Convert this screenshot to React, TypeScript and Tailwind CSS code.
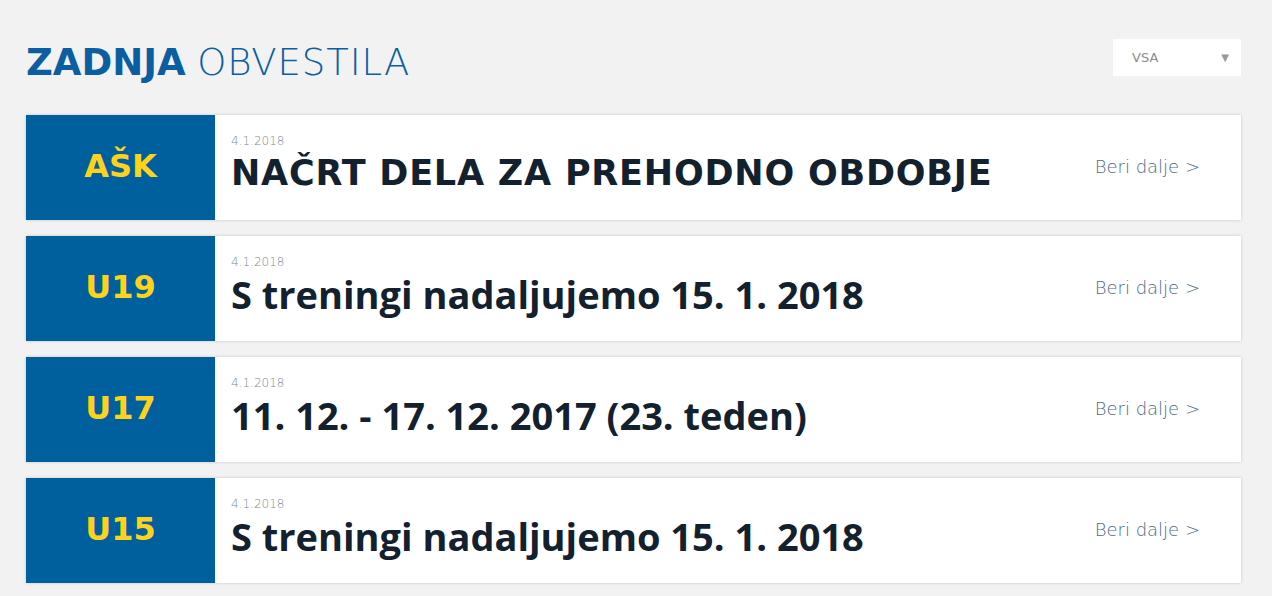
const items = [
  { tag: "AŠK", date: "4.1.2018", title: "NAČRT DELA ZA PREHODNO OBDOBJE", caps: true },
  { tag: "U19", date: "4.1.2018", title: "S treningi nadaljujemo 15. 1. 2018", caps: false },
  { tag: "U17", date: "4.1.2018", title: "11. 12. - 17. 12. 2017 (23. teden)", caps: false },
  { tag: "U15", date: "4.1.2018", title: "S treningi nadaljujemo 15. 1. 2018", caps: false },
];

export default function App() {
  return (
    <div
      className="min-h-[596px] bg-[#f2f2f2] pl-[26px] pr-[31px] pt-[39px]"
      style={{ fontFamily: '"DejaVu Sans", "Noto Sans", sans-serif' }}
    >
      {/* header */}
      <div className="flex items-start justify-between">
        <h1 className="mt-[3px] text-[37px] leading-[42px] text-[#0b5fa0]">
          <span className="font-bold">ZADNJA</span>{" "}
          <span className="font-extralight tracking-[0.9px]">OBVESTILA</span>
        </h1>
        <div className="flex h-[37px] w-[128px] items-center justify-between bg-white pl-[19px] pr-[12px] text-[13px] text-[#8c8c8c]">
          <span>VSA</span>
          <span className="text-[10px] text-[#999]">▼</span>
        </div>
      </div>

      {/* list */}
      <div className="mt-[31px] flex flex-col gap-[16px]">
        {items.map((it, i) => (
          <div
            key={i}
            className="flex h-[105px] bg-white shadow-[0_0_3px_rgba(0,0,0,0.18)]"
          >
            <div className="flex w-[189px] shrink-0 items-center justify-center pb-[3px] text-[32px] font-bold text-[#fcd21c] bg-[#00609e]">
              {it.tag}
            </div>
            <div className="flex flex-1 flex-col pl-[16px] pt-[19px]">
              <div className="text-[12px] leading-[14px] font-light text-[#7d8894]">{it.date}</div>
              {it.caps ? (
                <div className="mt-[4px] text-[35px] leading-[42px] font-bold tracking-[0.8px] text-[#13212f]">
                  {it.title}
                </div>
              ) : (
                <div
                  className="mt-[3px] text-[38px] leading-[44px] font-bold text-[#13212f]"
                  style={{ fontFamily: '"Open Sans", sans-serif' }}
                >
                  {it.title}
                </div>
              )}
            </div>
            <div className="flex items-center pr-[41px] pb-[3px] text-[18px] font-extralight text-[#4b6a89]">
              Beri dalje &gt;
            </div>
          </div>
        ))}
      </div>
    </div>
  );
}
